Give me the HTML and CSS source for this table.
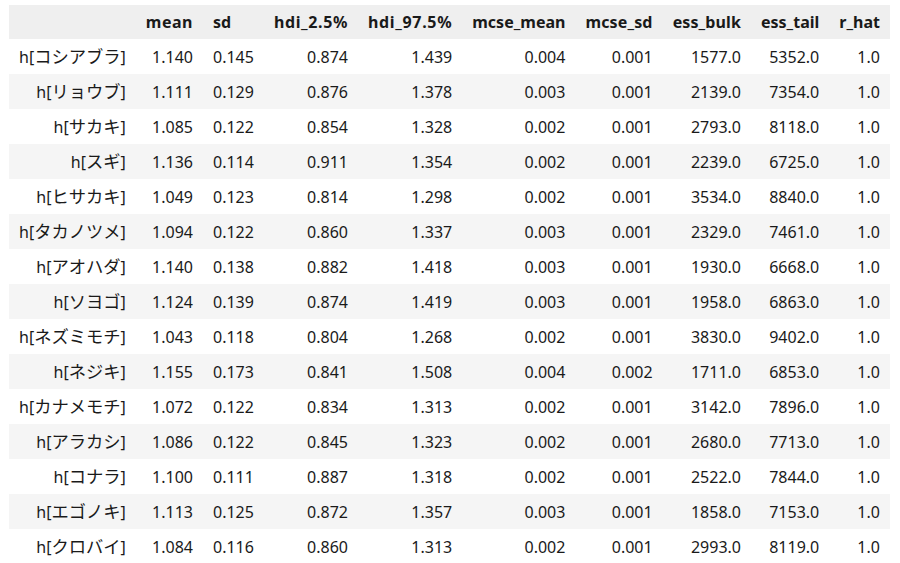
FILE: index.html
```html
<!DOCTYPE html>
<html lang="ja">
<head>
<meta charset="utf-8">
<title>summary</title>
<link rel="stylesheet" href="styles.css">
</head>
<body>
<table class="df">
  <thead>
    <tr><th class="blank"></th><th class="mean">mean</th><th>sd</th><th class="hdi-lo">hdi_2.5%</th><th class="hdi-hi">hdi_97.5%</th><th>mcse_mean</th><th class="mcse-sd">mcse_sd</th><th class="ess-bulk">ess_bulk</th><th>ess_tail</th><th>r_hat</th></tr>
  </thead>
  <tbody>
    <tr><th>h[<span class="kana">コシアブラ</span>]</th><td>1.140</td><td>0.145</td><td>0.874</td><td>1.439</td><td>0.004</td><td>0.001</td><td>1577.0</td><td>5352.0</td><td>1.0</td></tr>
    <tr><th>h[<span class="kana">リョウブ</span>]</th><td>1.111</td><td>0.129</td><td>0.876</td><td>1.378</td><td>0.003</td><td>0.001</td><td>2139.0</td><td>7354.0</td><td>1.0</td></tr>
    <tr><th>h[<span class="kana">サカキ</span>]</th><td>1.085</td><td>0.122</td><td>0.854</td><td>1.328</td><td>0.002</td><td>0.001</td><td>2793.0</td><td>8118.0</td><td>1.0</td></tr>
    <tr><th>h[<span class="kana">スギ</span>]</th><td>1.136</td><td>0.114</td><td>0.911</td><td>1.354</td><td>0.002</td><td>0.001</td><td>2239.0</td><td>6725.0</td><td>1.0</td></tr>
    <tr><th>h[<span class="kana">ヒサカキ</span>]</th><td>1.049</td><td>0.123</td><td>0.814</td><td>1.298</td><td>0.002</td><td>0.001</td><td>3534.0</td><td>8840.0</td><td>1.0</td></tr>
    <tr><th>h[<span class="kana">タカノツメ</span>]</th><td>1.094</td><td>0.122</td><td>0.860</td><td>1.337</td><td>0.003</td><td>0.001</td><td>2329.0</td><td>7461.0</td><td>1.0</td></tr>
    <tr><th>h[<span class="kana">アオハダ</span>]</th><td>1.140</td><td>0.138</td><td>0.882</td><td>1.418</td><td>0.003</td><td>0.001</td><td>1930.0</td><td>6668.0</td><td>1.0</td></tr>
    <tr><th>h[<span class="kana">ソヨゴ</span>]</th><td>1.124</td><td>0.139</td><td>0.874</td><td>1.419</td><td>0.003</td><td>0.001</td><td>1958.0</td><td>6863.0</td><td>1.0</td></tr>
    <tr><th>h[<span class="kana">ネズミモチ</span>]</th><td>1.043</td><td>0.118</td><td>0.804</td><td>1.268</td><td>0.002</td><td>0.001</td><td>3830.0</td><td>9402.0</td><td>1.0</td></tr>
    <tr><th>h[<span class="kana">ネジキ</span>]</th><td>1.155</td><td>0.173</td><td>0.841</td><td>1.508</td><td>0.004</td><td>0.002</td><td>1711.0</td><td>6853.0</td><td>1.0</td></tr>
    <tr><th>h[<span class="kana">カナメモチ</span>]</th><td>1.072</td><td>0.122</td><td>0.834</td><td>1.313</td><td>0.002</td><td>0.001</td><td>3142.0</td><td>7896.0</td><td>1.0</td></tr>
    <tr><th>h[<span class="kana">アラカシ</span>]</th><td>1.086</td><td>0.122</td><td>0.845</td><td>1.323</td><td>0.002</td><td>0.001</td><td>2680.0</td><td>7713.0</td><td>1.0</td></tr>
    <tr><th>h[<span class="kana">コナラ</span>]</th><td>1.100</td><td>0.111</td><td>0.887</td><td>1.318</td><td>0.002</td><td>0.001</td><td>2522.0</td><td>7844.0</td><td>1.0</td></tr>
    <tr><th>h[<span class="kana">エゴノキ</span>]</th><td>1.113</td><td>0.125</td><td>0.872</td><td>1.357</td><td>0.003</td><td>0.001</td><td>1858.0</td><td>7153.0</td><td>1.0</td></tr>
    <tr><th>h[<span class="kana">クロバイ</span>]</th><td>1.084</td><td>0.116</td><td>0.860</td><td>1.313</td><td>0.002</td><td>0.001</td><td>2993.0</td><td>8119.0</td><td>1.0</td></tr>
  </tbody>
</table>
</body>
</html>
```
FILE: styles.css
```css
html, body {
  margin: 0;
  padding: 0;
  background: #ffffff;
}
body {
  padding: 5px 0 0 9px;
  font-family: "Noto Sans", "Noto Sans CJK JP", sans-serif;
  font-size: 16px;
  color: #1a1a1a;
}
.df {
  border-collapse: collapse;
  border-spacing: 0;
}
.df th, .df td {
  padding: 0 10px;
  white-space: nowrap;
  vertical-align: middle;
}
.df thead tr {
  height: 34px;
  background: #efefef;
}
.df thead th {
  font-weight: 700;
  text-align: left;
}
.df thead .mean {
  letter-spacing: 0.5px;
}
.df thead .hdi-lo {
  letter-spacing: 0.62px;
}
.df thead .hdi-hi {
  letter-spacing: 0.67px;
}
.df thead .mcse-sd {
  letter-spacing: 0.15px;
}
.df thead .ess-bulk {
  letter-spacing: 0.12px;
}
.df tbody tr {
  height: 35px;
}
.df tbody tr:nth-child(even) {
  background: #f5f5f5;
}
.df tbody th {
  font-weight: 400;
  text-align: right;
}
.df tbody th .kana {
  font-family: "Noto Sans CJK JP", sans-serif;
  font-size: 17.3px;
  line-height: 1;
}
.df tbody td {
  text-align: right;
}
```
